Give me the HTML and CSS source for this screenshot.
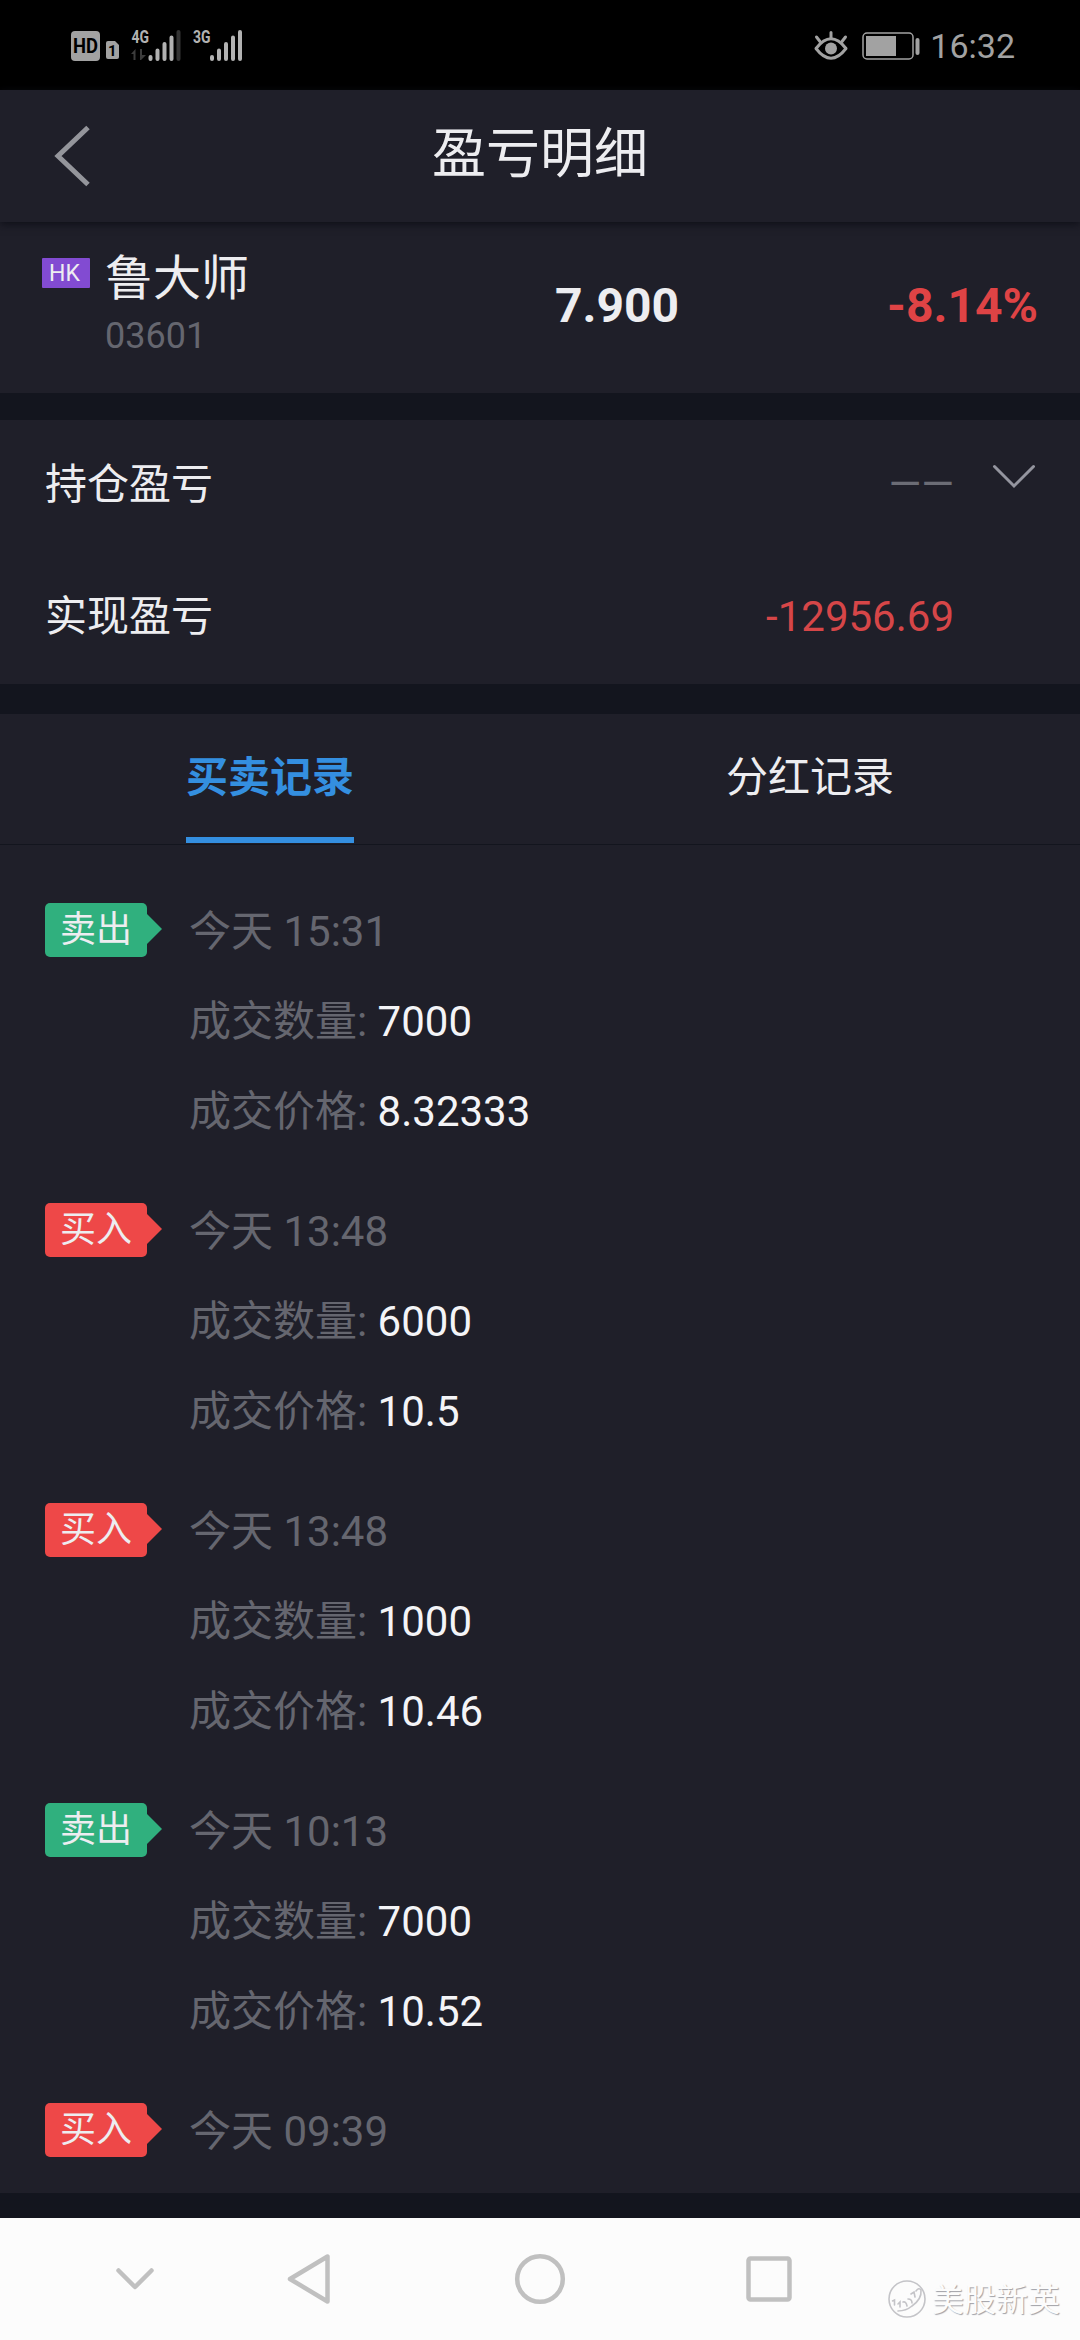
FILE: index.html
```html
<!DOCTYPE html>
<html lang="zh-CN">
<head>
<meta charset="utf-8">
<title>盈亏明细</title>
<link rel="stylesheet" href="styles.css">
</head>
<body>
<div class="screen">
  <div class="status">
    <svg class="status-left" width="180" height="50" viewBox="0 0 180 50">
      <rect x="1" y="11" width="29" height="30" rx="4" fill="#a2a2a2"/>
      <text x="15.5" y="33" class="st-hd" text-anchor="middle" textLength="25" lengthAdjust="spacingAndGlyphs">HD</text>
      <path d="M38 21h7l4 4v12q0 2-2 2h-9q-2 0-2-2v-14q0-2 2-2z" fill="#a2a2a2"/>
      <text x="42.300" y="36" class="st-sim" text-anchor="middle">1</text>
      <text x="61.500" y="23" class="st-net" textLength="17.500" lengthAdjust="spacingAndGlyphs">4G</text>
      <path d="M61 34l4.500-5v11h-2v-6zM70 29h2v6h4l-5 5h-1z" fill="#3c3c3c"/>
      <g stroke="#b2b2b2" stroke-width="4" stroke-linecap="round">
        <path d="M80.500 37v2M87.500 30.500v8.500M94.500 24v15M101.500 17.500v21.500"/>
        <path d="M108.500 12v27" stroke="#343434"/>
        <path d="M142 37v2M149 30.500v8.500M156 24v15M163 17.500v21.500M170 12v27"/>
      </g>
      <text x="123" y="23" class="st-net" textLength="17.500" lengthAdjust="spacingAndGlyphs">3G</text>
    </svg>
    <div class="status-right">
      <svg width="34" height="32" viewBox="0 0 34 32" fill="none" stroke="#a2a2a2" stroke-width="3">
        <path d="M2 18.500Q17-1 32 18.500Q17 38 2 18.500z" stroke-linejoin="round"/>
        <circle cx="17" cy="18.500" r="6" fill="#a2a2a2" stroke="none"/>
        <path d="M17 8V2.500M6 11.500L2.500 7M28 11.500L31.500 7" stroke-linecap="round"/>
      </svg>
      <svg class="battery" width="58" height="28" viewBox="0 0 58 28">
        <rect x="1" y="1" width="50" height="26" rx="4" fill="none" stroke="#a2a2a2" stroke-width="1.500"/>
        <rect x="4" y="4" width="30" height="20" fill="#a2a2a2"/>
        <rect x="53.500" y="6" width="4" height="17" rx="2" fill="#a2a2a2"/>
      </svg>
      <span class="clock">16:32</span>
    </div>
  </div>

  <header class="header">
    <svg class="back" width="40" height="64" viewBox="0 0 40 64" fill="none" stroke="#94959b" stroke-width="5">
      <path d="M37 3.500L7 32L37 60.500"/>
    </svg>
    <h1 class="title">盈亏明细</h1>
  </header>

  <section class="stock">
    <span class="market">HK</span>
    <div class="identity">
      <div class="name">鲁大师</div>
      <div class="code">03601</div>
    </div>
    <div class="price">7.900</div>
    <div class="change">-8.14%</div>
  </section>

  <section class="profit">
    <div class="profit-row">
      <span class="label">持仓盈亏</span>
      <span class="value empty">——</span>
      <svg class="chevron" width="44" height="26" viewBox="0 0 44 26" fill="none" stroke="#94959f" stroke-width="3" stroke-linecap="round">
        <path d="M2.500 2.500L22 22L41.500 2.500"/>
      </svg>
    </div>
    <div class="profit-row">
      <span class="label">实现盈亏</span>
      <span class="value loss">-12956.69</span>
    </div>
  </section>

  <nav class="tabs">
    <div class="tab"><span class="tab-text active">买卖记录</span></div>
    <div class="tab"><span class="tab-text">分红记录</span></div>
  </nav>

  <main class="records">
    <article class="record">
      <div class="badge sell">卖出</div>
      <div class="detail">
        <p>今天 15:31</p>
        <p>成交数量: <b>7000</b></p>
        <p>成交价格: <b>8.32333</b></p>
      </div>
    </article>
    <article class="record">
      <div class="badge buy">买入</div>
      <div class="detail">
        <p>今天 13:48</p>
        <p>成交数量: <b>6000</b></p>
        <p>成交价格: <b>10.5</b></p>
      </div>
    </article>
    <article class="record">
      <div class="badge buy">买入</div>
      <div class="detail">
        <p>今天 13:48</p>
        <p>成交数量: <b>1000</b></p>
        <p>成交价格: <b>10.46</b></p>
      </div>
    </article>
    <article class="record">
      <div class="badge sell">卖出</div>
      <div class="detail">
        <p>今天 10:13</p>
        <p>成交数量: <b>7000</b></p>
        <p>成交价格: <b>10.52</b></p>
      </div>
    </article>
    <article class="record">
      <div class="badge buy">买入</div>
      <div class="detail">
        <p>今天 09:39</p>
      </div>
    </article>
  </main>

  <footer class="navbar">
    <svg width="1080" height="122" viewBox="0 0 1080 122" fill="none" stroke="#c0c0c0" stroke-width="4.500" stroke-linejoin="round" stroke-linecap="round">
      <path d="M118.500 52.500L135 69L151.500 52.500"/>
      <path d="M327.500 38.500V83.500L290 61z"/>
      <circle cx="540" cy="61" r="22.800"/>
      <rect x="748.500" y="40.500" width="41" height="41" rx="2"/>
    </svg>
    <div class="watermark">
      <svg width="40" height="40" viewBox="0 0 40 40" fill="none" stroke="#c4c4c8" stroke-width="1.600" stroke-linecap="round">
        <circle cx="20" cy="20" r="18"/>
        <path d="M5.500 22l2-1v5M11 25l2-2v5M16 23q3-1 4 4M21 20q4 0 4 4M24 15l3-2l1 5M29 12q3-4 5-1q1 9-9 16q-6 5-14 5"/>
      </svg>
      <span>美股新英</span>
    </div>
  </footer>
</div>
</body>
</html>
```

FILE: styles.css
```css
* {
  box-sizing: border-box;
}

body {
  margin: 0;
  background: #13151e;
  font-family: Roboto, "Noto Sans CJK SC", sans-serif;
  font-size: 42px;
  color: #ededf0;
}

.screen {
  width: 1080px;
  height: 2340px;
  display: flex;
  flex-direction: column;
  overflow: hidden;
}

.status {
  height: 90px;
  flex: none;
  display: flex;
  justify-content: space-between;
  background: #000;
  padding: 20px 65px 0 70px;
}

.status-left {
  display: block;
}

.st-hd {
  font: 700 20px Roboto, sans-serif;
  fill: #000;
}

.st-sim {
  font: 700 15px Roboto, sans-serif;
  fill: #000;
}

.st-net {
  font: 700 18px Roboto, sans-serif;
  fill: #b2b2b2;
}

.status-right {
  display: flex;
  align-items: center;
  height: 52px;
}

.battery {
  margin-left: 14px;
}

.clock {
  margin-left: 10px;
  font-size: 34px;
  line-height: 52px;
  color: #a2a2a2;
}

.header {
  height: 132px;
  flex: none;
  position: relative;
  z-index: 1;
  display: grid;
  grid-template-columns: 100px 1fr 100px;
  background: #1f1f29;
  box-shadow: 0 2px 8px #0e0f17;
}

.back {
  margin: 34px 0 0 51px;
}

.title {
  margin: 0;
  font-size: 54px;
  line-height: 130px;
  font-weight: 400;
  text-align: center;
}

.stock {
  height: 171px;
  flex: none;
  display: grid;
  grid-template-columns: 63px 353px 1fr 1fr;
  padding: 0 42px;
  background: #1f1f29;
}

.market {
  width: 48px;
  height: 30px;
  margin-top: 36px;
  padding-right: 3px;
  background: #824bd2;
  border-radius: 1px;
  font-size: 23px;
  line-height: 32px;
  text-align: center;
}

.name {
  margin-top: 22px;
  font-size: 48px;
  line-height: 70px;
}

.code {
  margin-top: -2px;
  font-size: 36px;
  line-height: 48px;
  color: #65666f;
}

.price,
.change {
  font-size: 48px;
  line-height: 168px;
  font-weight: 700;
}

.price {
  padding-left: 97px;
}

.change {
  text-align: right;
  color: #df4345;
}

.profit {
  margin-top: 27px;
  height: 264px;
  flex: none;
  background: #1f1f29;
}

.profit-row {
  height: 132px;
  display: grid;
  grid-template-columns: 400px 509px 1fr;
  line-height: 129px;
  padding-left: 45px;
}

.value {
  text-align: right;
}

.empty {
  color: #6b6c75;
}

.loss {
  color: #d64648;
}

.chevron {
  margin: 44px 0 0 38px;
}

.tabs {
  margin-top: 30px;
  height: 131px;
  flex: none;
  display: grid;
  grid-template-columns: 1fr 1fr;
  background: #1f1f29;
  border-bottom: 1px solid #13151e;
}

.tab {
  display: flex;
  justify-content: center;
}

.tab-text {
  height: 129px;
  line-height: 128px;
}

.active {
  border-bottom: 6px solid #348fe0;
  color: #348fe0;
  font-weight: 700;
}

.records {
  height: 1348px;
  flex: none;
  padding: 42px 45px 0;
  background: #1f1f29;
  overflow: hidden;
}

.record {
  display: flex;
  gap: 42px;
  height: 300px;
}

.badge {
  position: relative;
  width: 102px;
  height: 54px;
  margin-top: 16px;
  border-radius: 5px;
  font-size: 36px;
  line-height: 54px;
  text-align: center;
}

.badge::after {
  content: "";
  position: absolute;
  left: 100px;
  top: 11px;
  width: 17px;
  height: 30px;
  background: inherit;
  clip-path: polygon(0 0, 2px 0, 100% 50%, 2px 100%, 0 100%);
}

.sell {
  background: #30b07e;
}

.buy {
  background: #ee4848;
}

.detail p {
  margin: 0;
  line-height: 90px;
  color: #65666f;
  white-space: pre;
}

.detail b {
  font-weight: 400;
  color: #f4f4f7;
}

.navbar {
  position: relative;
  margin-top: auto;
  height: 122px;
  flex: none;
  background: #fcfcfc;
}

.navbar > svg {
  display: block;
}

.watermark {
  position: absolute;
  right: 20px;
  bottom: 20px;
  display: flex;
  align-items: center;
  gap: 5px;
  font-size: 32px;
  line-height: 40px;
  color: #fcfcfc;
  text-shadow: 1px 1px 1px #a0a0a6;
}

.watermark span {
  padding-top: 3px;
}
```
